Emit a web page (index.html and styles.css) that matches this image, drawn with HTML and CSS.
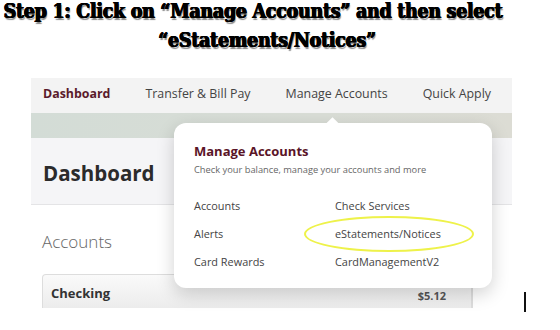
FILE: index.html
```html
<!DOCTYPE html>
<html lang="en">
<head>
    <meta charset="UTF-8">
    <meta name="viewport" content="width=device-width, initial-scale=1.0">
    <link rel="stylesheet" href="styles.css">
    <title>Step 1 - Manage Accounts</title>
</head>
<body>
    <div class="title">
        <div class="title-line first">Step 1: Click on “Manage Accounts” and then select</div>
        <div class="title-line second">“eStatements/Notices”</div>
    </div>

    <div class="shot">
        <div class="nav">
            <span class="nav-item active">Dashboard</span>
            <span class="nav-item">Transfer &amp; Bill Pay</span>
            <span class="nav-item">Manage Accounts</span>
            <span class="nav-item">Quick Apply</span>
        </div>
        <div class="band"></div>
        <div class="page-head">
            <h1>Dashboard</h1>
        </div>
        <div class="content">
            <h2>Accounts</h2>
            <div class="card-row">
                <div class="card">
                    <span class="card-name">Checking</span>
                    <span class="card-amount">$5.12</span>
                </div>
            </div>
        </div>

        <div class="menu">
            <div class="menu-title">Manage Accounts</div>
            <div class="menu-sub">Check your balance, manage your accounts and more</div>
            <div class="menu-grid">
                <span>Accounts</span>
                <span>Check Services</span>
                <span>Alerts</span>
                <span class="marked">eStatements/Notices</span>
                <span>Card Rewards</span>
                <span>CardManagementV2</span>
            </div>
        </div>
    </div>

    <div class="cursor"></div>
</body>
</html>
```

FILE: styles.css
```css
body {
    margin: 0;
    background-color: #fff;
    position: relative;
    height: 330px;
    overflow: hidden;
    font-family: "Open Sans", "Noto Sans", sans-serif;
}

.title {
    padding-top: 1px;
    font-family: "DejaVu Serif", serif;
    font-stretch: condensed;
    font-weight: bold;
    font-size: 19.5px;
    letter-spacing: -0.3px;
    color: #000;
    text-shadow: 0.6px 0 0 #000, -0.5px 0 0 #000, 0 0.4px 0 #000, 1px 1.5px 1px #888;
}

.title-line {
    height: 32px;
    line-height: 30px;
    text-align: center;
}

.title-line.first {
    width: 506px;
    height: 29px;
    margin-top: -4px;
}

.title-line.second {
    width: 534px;
}

.shot {
    position: relative;
    margin: 20px 0 0 31px;
    width: 481px;
    height: 222px;
}

.nav {
    height: 35px;
    box-sizing: border-box;
    background-color: #f3f3f3;
    display: flex;
    align-items: center;
    padding: 0 0 4px 12px;
    gap: 35px;
    font-size: 12.4px;
    color: #444;
}

.nav-item.active {
    font-weight: bold;
    color: #5a1a2b;
}

.band {
    height: 25px;
    background: linear-gradient(90deg, #d3dcd6, #d9ddd6 60%, #dcdcd4);
}

.page-head {
    height: 67px;
    box-sizing: border-box;
    background-color: #f5f5f7;
    border-bottom: 1px solid #e4e4e6;
    display: flex;
    align-items: center;
    padding: 4px 0 0 12px;
}

.page-head h1 {
    margin: 0;
    font-size: 20.5px;
    font-weight: bold;
    color: #2b2b2b;
}

.content {
    padding: 25px 0 0 11px;
}

.content h2 {
    margin: 0;
    font-size: 17px;
    font-weight: 300;
    color: #666;
}

.card-row {
    margin-top: 21px;
    width: 430px;
    border-right: 1px solid #ddd;
}

.card {
    height: 24px;
    border: 1px solid #ddd;
    border-bottom: none;
    border-radius: 4px 4px 0 0;
    background: linear-gradient(180deg, #fafafa, #ececec);
    display: flex;
    justify-content: space-between;
    padding: 9px 25px 0 8px;
}

.card-name {
    font-size: 13px;
    font-weight: bold;
    color: #333;
}

.card-amount {
    font-size: 11px;
    font-weight: bold;
    color: #555;
    padding-top: 4px;
}

.menu {
    position: absolute;
    left: 143px;
    top: 45px;
    width: 318px;
    height: 165px;
    box-sizing: border-box;
    padding: 19px 20px 0 20px;
    background-color: #fff;
    border-radius: 12px;
    box-shadow: 0 6px 18px rgba(0, 0, 0, 0.18);
}

.menu::before {
    content: "";
    position: absolute;
    left: 154px;
    top: -4px;
    width: 9px;
    height: 9px;
    background-color: #fff;
    transform: rotate(45deg);
}

.menu-title {
    font-size: 13px;
    font-weight: bold;
    color: #5a1427;
}

.menu-sub {
    margin-top: 3px;
    font-size: 9.3px;
    color: #666;
}

.menu-grid {
    margin-top: 21px;
    display: grid;
    grid-template-columns: 141px 1fr;
    row-gap: 10px;
    font-size: 10.9px;
    color: #444;
    line-height: 18px;
}

.marked {
    position: relative;
}

.marked::after {
    content: "";
    position: absolute;
    left: -31px;
    top: -9px;
    width: 166px;
    height: 32px;
    border: 2.5px solid #eef24a;
    border-radius: 50%;
    filter: blur(0.4px);
}

.cursor {
    position: absolute;
    left: 524px;
    top: 292px;
    width: 1.5px;
    height: 20px;
    background-color: #111;
}
```
